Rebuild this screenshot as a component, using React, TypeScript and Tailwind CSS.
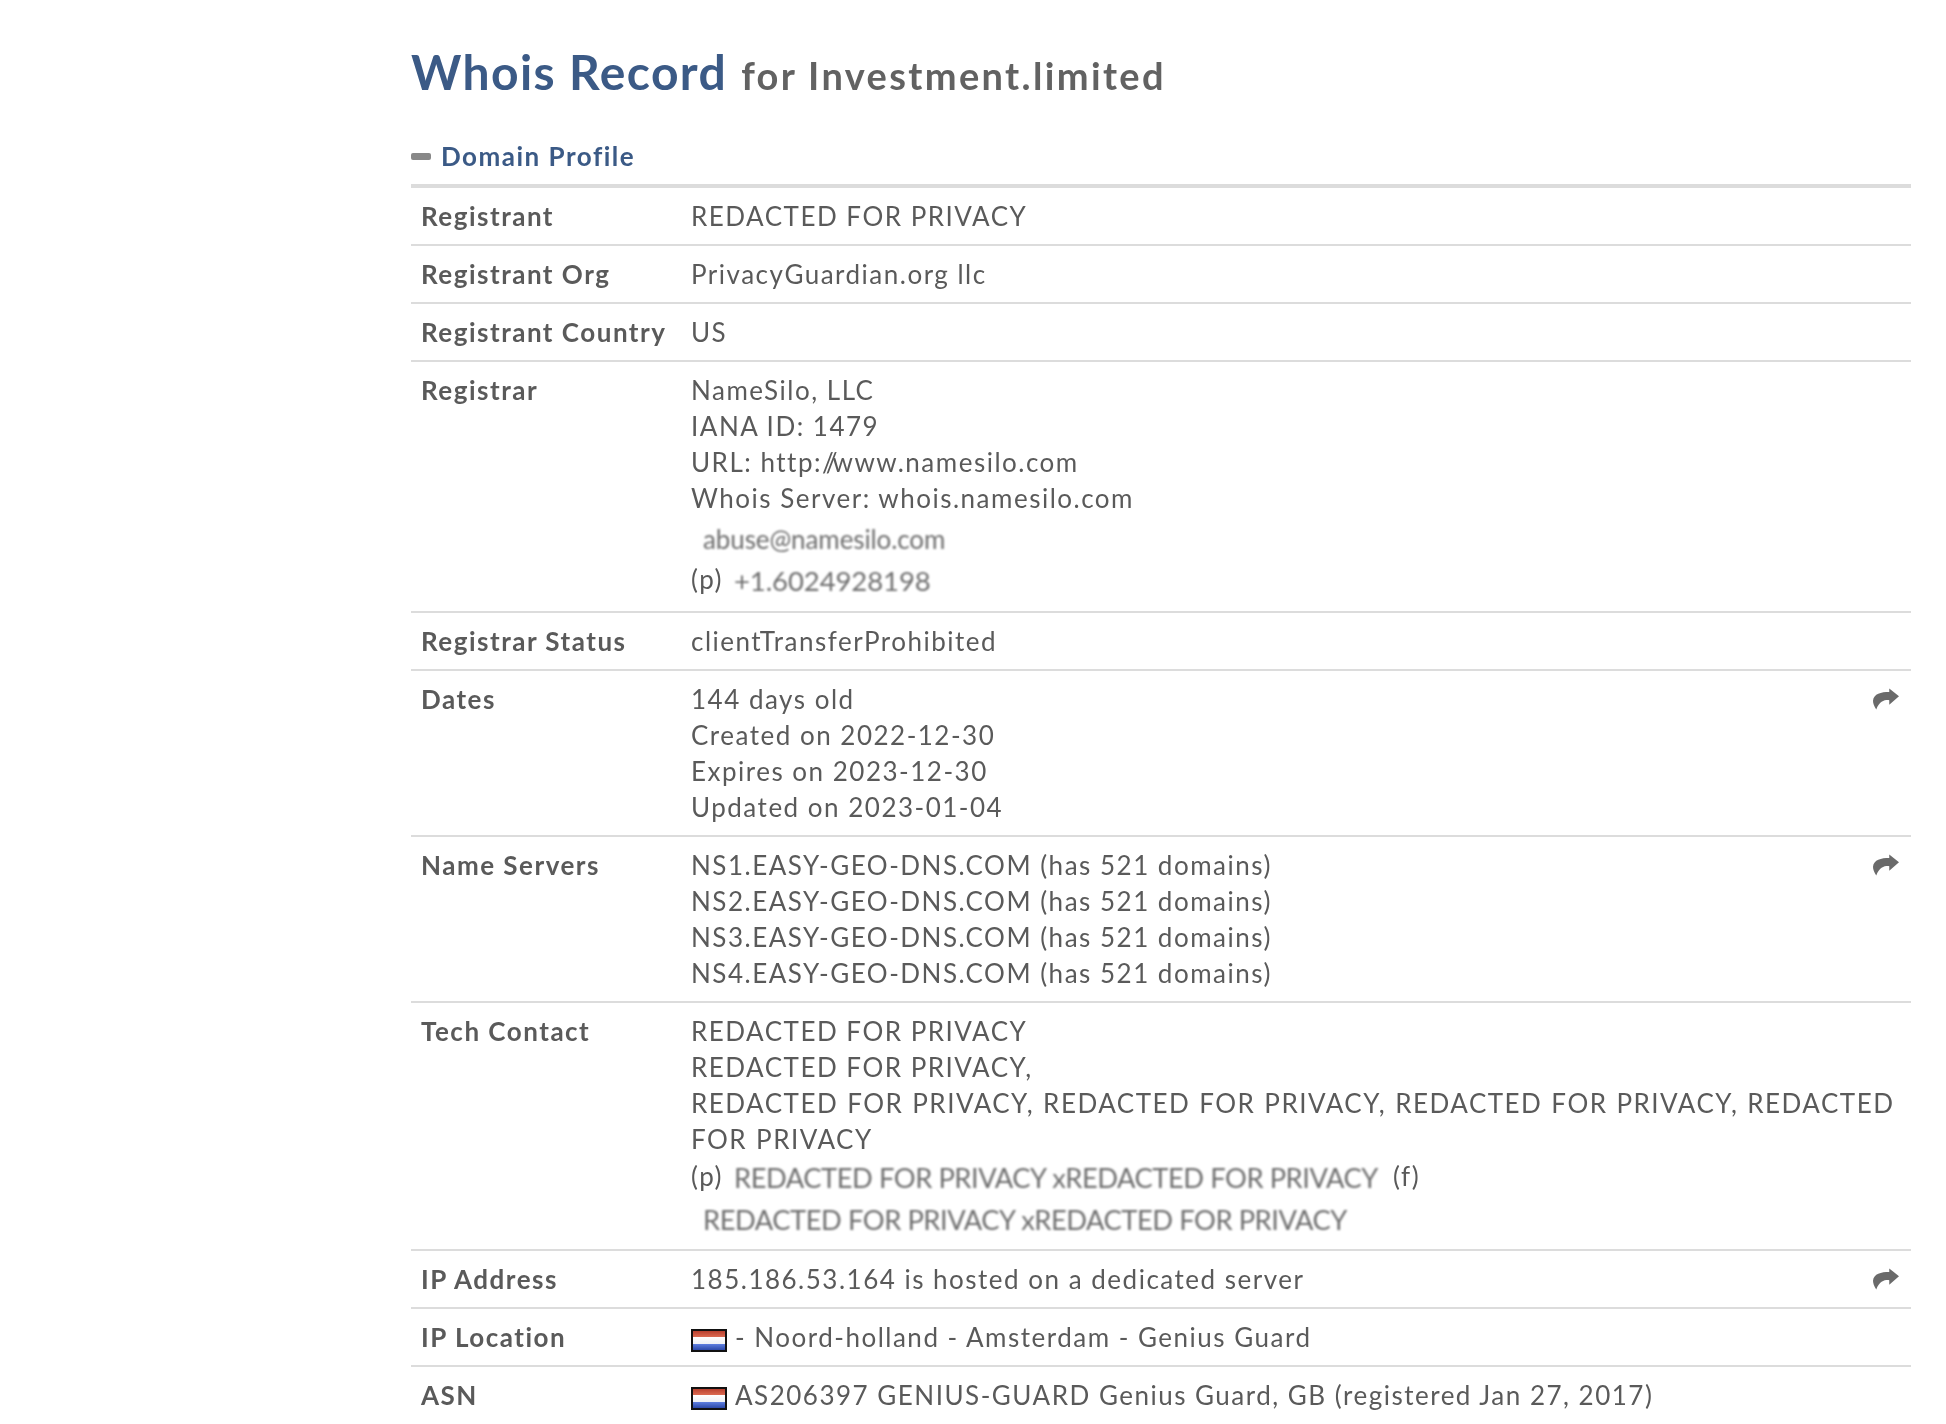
import type { ReactNode } from 'react';

function Flag() {
  return (
    <span className="mr-[8px] mt-[10px] flex h-[23px] w-[36px] shrink-0 flex-col self-start overflow-hidden border-2 border-[#111] blur-[0.4px]">
      <span className="flex-1 bg-gradient-to-b from-[#b8402f] to-[#dc6a52]" />
      <span className="flex-1 bg-gradient-to-b from-[#fff] to-[#eef0f5]" />
      <span className="flex-1 bg-gradient-to-b from-[#5f7fe0] to-[#2c48a8]" />
    </span>
  );
}

function ShareIcon() {
  return (
    <svg viewBox="0 0 80 65" className="mt-[7px] h-[22px] w-[26px]" fill="#6a6a6a">
      <path d="M50 0 L80 24 L50 50 V36 C36 35 20 38 10 65 C3 55 0 45 0 38 C2 16 25 11 50 11 Z" />
    </svg>
  );
}

function Row({ label, share, children }: { label: string; share?: boolean; children: ReactNode }) {
  return (
    <div className="flex border-b-2 border-[#dcdcdc] py-[10px] last:border-b-0">
      <div className="w-[280px] shrink-0 pl-[10px] font-bold">{label}</div>
      <div className="min-w-0 flex-1">{children}</div>
      {share && (
        <div className="w-[38px] shrink-0">
          <ShareIcon />
        </div>
      )}
    </div>
  );
}

export default function App() {
  return (
    <div className="h-[1424px] overflow-hidden bg-white pl-[411px] pr-[35px] font-['Lato',sans-serif] text-[26px] leading-[36px] tracking-[1.5px] text-[#5a5a5a] blur-[0.25px]">
      <h1 className="pt-[40px]">
        <span className="text-[48px] font-bold leading-[64px] tracking-[1.4px] text-[#3b5a86]">Whois Record</span>
        <span className="ml-[14px] text-[38px] font-bold tracking-[2.35px] text-[#626262]">for Investment.limited</span>
      </h1>
      <div className="mt-[34px] flex items-center border-b-4 border-[#dcdcdc] pb-[10px] font-bold text-[#3b5a86]">
        <span className="mr-[10px] h-[7px] w-[20px] rounded-[2px] bg-[#888]" />
        Domain Profile
      </div>
      <Row label="Registrant">REDACTED FOR PRIVACY</Row>
      <Row label="Registrant Org">PrivacyGuardian.org llc</Row>
      <Row label="Registrant Country">US</Row>
      <Row label="Registrar">
        <div>NameSilo, LLC</div>
        <div>IANA ID: 1479</div>
        <div>
          URL: http:<span className="tracking-[-8px]">/</span><span className="tracking-[-5px]">/</span>www.namesilo.com
        </div>
        <div>Whois Server: whois.namesilo.com</div>
        <div className="mt-[5px] h-[42px] pl-[12px]">
          <span className="inline-block text-[26px] tracking-[-0.1px] text-[#6e6e6e] blur-[0.8px]">abuse@namesilo.com</span>
        </div>
        <div className="flex h-[38px]">
          <span className="mr-[11px] -mt-[2px]">(p)</span>
          <span className="inline-block text-[27.5px] tracking-[-0.1px] text-[#6e6e6e] blur-[0.8px]">+1.6024928198</span>
        </div>
      </Row>
      <Row label="Registrar Status">clientTransferProhibited</Row>
      <Row label="Dates" share>
        <div>144 days old</div>
        <div>Created on 2022-12-30</div>
        <div>Expires on 2023-12-30</div>
        <div>Updated on 2023-01-04</div>
      </Row>
      <Row label="Name Servers" share>
        <div>NS1.EASY-GEO-DNS.COM (has 521 domains)</div>
        <div>NS2.EASY-GEO-DNS.COM (has 521 domains)</div>
        <div>NS3.EASY-GEO-DNS.COM (has 521 domains)</div>
        <div>NS4.EASY-GEO-DNS.COM (has 521 domains)</div>
      </Row>
      <Row label="Tech Contact">
        <div>REDACTED FOR PRIVACY</div>
        <div>REDACTED FOR PRIVACY,</div>
        <div className="[word-spacing:0.8px]">REDACTED FOR PRIVACY, REDACTED FOR PRIVACY, REDACTED FOR PRIVACY, REDACTED FOR PRIVACY</div>
        <div className="mt-[3px] flex h-[42px]">
          <span className="mr-[11px] -mt-[2px]">(p)</span>
          <span className="inline-block text-[27.3px] tracking-[-0.44px] text-[#6e6e6e] blur-[0.8px]">REDACTED FOR PRIVACY xREDACTED FOR PRIVACY</span>
          <span className="ml-[15px] -mt-[2px]">(f)</span>
        </div>
        <div className="h-[37px] pl-[12px]">
          <span className="inline-block text-[27.3px] tracking-[-0.44px] text-[#6e6e6e] blur-[0.8px]">REDACTED FOR PRIVACY xREDACTED FOR PRIVACY</span>
        </div>
      </Row>
      <Row label="IP Address" share>185.186.53.164 is hosted on a dedicated server</Row>
      <Row label="IP Location">
        <div className="flex h-[36px] items-center">
          <Flag />- Noord-holland - Amsterdam - Genius Guard
        </div>
      </Row>
      <Row label="ASN">
        <div className="flex h-[36px] items-center">
          <Flag />AS206397 GENIUS-GUARD Genius Guard, GB (registered Jan 27, 2017)
        </div>
      </Row>
    </div>
  );
}
